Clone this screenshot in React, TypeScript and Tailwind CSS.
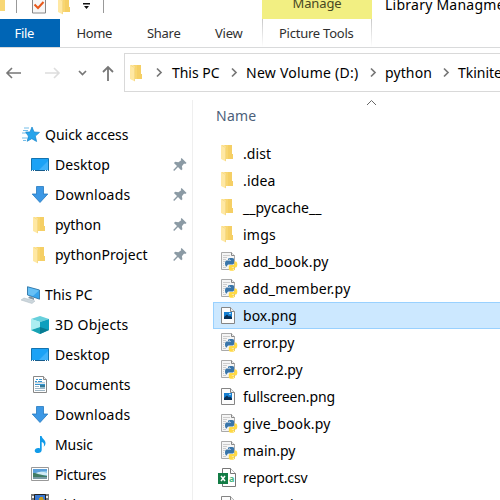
import { useLayoutEffect, useRef, useState } from 'react';

function Label({ text, width, className = '' }: { text: string; width: number; className?: string }) {
  const ref = useRef<HTMLSpanElement>(null);
  const [spacing, setSpacing] = useState(0);
  useLayoutEffect(() => {
    if (ref.current) {
      const natural = ref.current.getBoundingClientRect().width;
      setSpacing((width - natural) / text.length);
    }
  }, [text, width]);
  return (
    <span ref={ref} className={`shrink-0 whitespace-pre ${className}`} style={{ letterSpacing: spacing }}>
      {text}
    </span>
  );
}

const svg = 'block shrink-0 overflow-visible';

function Folder() {
  return (
    <svg className={svg} width="18" height="18" viewBox="0 0 18 18">
      <path d="M5 1h8v9h1v5H5z" fill="#f8d671" />
      <path d="M9 1h4v9h1v5H9z" fill="#f5cf65" />
      <path d="M2 1h3l2 2v14.5L2 15z" fill="#ffe8a3" />
      <path d="M3 1.5 6.5 3.6V17" fill="none" stroke="#f2d47c" strokeWidth=".7" />
    </svg>
  );
}

function Star() {
  return (
    <svg className={svg} width="18" height="18" viewBox="0 0 18 18">
      <path d="M10 1l2 5 5.5.4-4.2 3.7 1.3 5.4-4.8-2.8-4.6 2.6 1.2-5.2L3.5 6 8 6z" fill="#27a4eb" stroke="#1484cc" strokeWidth=".7" />
      <path d="M2 2h5M1 4.5h5M0 7h4M0 12h5M1 14.5h3" stroke="#75bee9" strokeWidth="1" />
    </svg>
  );
}

function Desktop() {
  return (
    <svg className={svg} width="18" height="18" viewBox="0 0 18 18">
      <path d="M.5 2.5h17v12H.5z" fill="#1ba2f6" stroke="#1473af" />
      <path d="M8 14 17 5v9z" fill="#40b2fa" />
      <path d="M.5 14.5h17" stroke="#155b8c" />
      <path d="M1 14.5h1M3 14.5h1M14 14.5h1M16 14.5h1" stroke="#fff" />
    </svg>
  );
}

function Download() {
  return (
    <svg className={svg} width="18" height="18" viewBox="0 0 18 18">
      <path d="M5.5.5h7V8h4.3L9 16.5 1.2 8h4.3z" fill="#3c98e5" stroke="#2579bf" strokeWidth=".8" />
    </svg>
  );
}

function Computer() {
  return (
    <svg className={svg} width="20" height="18" viewBox="0 0 20 18">
      <path d="M6 0l12 3.5v9L6 8z" fill="#d7e2e8" />
      <path d="M6.5.8 18.5 4v9.2L6.5 9z" fill="#37a4ec" stroke="#286d9e" strokeWidth=".8" />
      <path d="M7 1.5l11 3-6 5.5-5-1.6z" fill="#67c0f5" />
      <path d="M9 10l4 2v2l-6-2z" fill="#8197a5" />
      <path d="M0 14l3-2 11 3-3 2.5z" fill="#ccd6dc" stroke="#aab8c1" strokeWidth=".5" />
    </svg>
  );
}

function Cube() {
  return (
    <svg className={svg} width="18" height="18" viewBox="0 0 18 18">
      <path d="M0 3 9 0l9 3-9 3z" fill="#67d0dc" />
      <path d="M0 3l9 3v12l-9-4z" fill="#8ee6ec" />
      <path d="M9 6l9-3v11l-9 4z" fill="#0d9fbe" />
      <path d="M0 14l9-3v7z" fill="#18a2b3" />
      <path d="M9 11l9 3-9 4z" fill="#087b92" />
      <path d="M0 3l9 3v5l-9 3z" fill="#bcf2f4" opacity=".65" />
    </svg>
  );
}

function Documents() {
  return (
    <svg className={svg} width="18" height="18" viewBox="0 0 18 18">
      <path d="M2.5.5h10l3 3v13h-13z" fill="#fff" stroke="#888" />
      <path d="M12.5.5v3h3" fill="#eee" stroke="#888" />
      <path d="M5 3.5h2M8 3.5h3M4 5.5h2M7 5.5h4M4 8.5h10" stroke="#3595d2" />
      <path d="M4 6.8h10M4 10.5h4M4 12.5h10M4 14.5h10" stroke="#9db5c4" />
      <path d="M9 9h5v2.5H9z" fill="#347b9a" />
    </svg>
  );
}

function Music() {
  return (
    <svg className={svg} width="18" height="18" viewBox="0 0 18 18">
      <path d="M9 0h1.6c.5 3 4.2 4 3.9 7.2 0 1.5-.8 2.5-1.8 3.5.9-2.5 0-4.2-2-4.6v8c0 1.9-1.6 3-3.6 3-1.8 0-3.4-.7-3.4-2.3 0-2 2.7-3.4 5.3-2.4z" fill="#119be9" />
    </svg>
  );
}

function Pictures() {
  return (
    <svg className={svg} width="18" height="18" viewBox="0 0 18 18">
      <path d="M.5 1.5h17v13H.5z" fill="#fff" stroke="#999" />
      <path d="M2 3h14v10H2z" fill="#8bc9ec" />
      <path d="M2 3h14v2q-6 0-14 3z" fill="#5b9fda" />
      <path d="M5 7q5-2 8-1l3 1v2H4z" fill="#d1eaf4" />
      <path d="M2 7c4 0 7 2 14 3v1H2z" fill="#427c65" />
      <path d="M2 11h14v2H2z" fill="#789aa4" />
    </svg>
  );
}

function Videos() {
  return (
    <svg className={svg} width="18" height="18" viewBox="0 0 18 18">
      <path d="M0-2h18v18H0z" fill="#777" />
      <path d="M1 0h2v2H1zM1 4h2v2H1zM15 0h2v2h-2zM15 4h2v2h-2z" fill="#eee" />
      <path d="M3.5-1.5h11v17h-11z" fill="#3a78d0" stroke="#222" />
      <path d="M9 1h3v2h1v4H8V2h1z" fill="#c39b22" />
    </svg>
  );
}

function Pin() {
  return (
    <svg className={`${svg} text-[#8b9aa4]`} width="14" height="14" viewBox="0 0 14 14">
      <path d="M8.6 0 13.6 5l-1.5.9-1-.3-2.2 2.6.5 3-1.2 1.1L5 9.1 1.2 13l-1-.9L4 8.1.9 5l1.4-1.2 3.1.4L8.2 2.2 7.8 1z" fill="currentColor" />
    </svg>
  );
}

function Page({ children }: { children?: React.ReactNode }) {
  return (
    <svg className={svg} width="20" height="20" viewBox="0 0 20 20">
      <path d="M3.5 1.5h9l4 4v12h-13z" fill="#fcfcfc" stroke="#858585" />
      <path d="M12.5 1.5v4h4" fill="#eee" stroke="#858585" />
      {children}
    </svg>
  );
}

function Python() {
  return (
    <svg className={svg} width="20" height="20" viewBox="0 0 20 20">
      <path d="M3.5.5h10l3 3v14h-13z" fill="#f5f5f5" stroke="#aaa" />
      <path d="M13.5.5v3h3" fill="#eee" stroke="#888" />
      <path d="M5 3.5h7M5 5.5h4M5 7.5h3M5 9.5h2M5 11.5h1M5 13.5h1M5 15.5h3" stroke="#ccc" />
      <path d="M10 7c0-1.4 6-1.4 6 0v4c0 1-1 1.5-2 1.5h-3c-1 0-2 .6-2 2H8.500c-2 0-2-6 0-6h4.500V8h-3z" fill="#3975a9" />
      <path d="M16.500 9.500h1.3c2 0 2 6 0 6h-4v.5h3v1.500c0 1.800-6 1.800-6 0V14.500c0-1 .8-1.500 1.800-1.500h2.400c1 0 1.500-.7 1.500-1.500z" fill="#ffd944" />
      <circle cx="11.3" cy="7.2" r=".5" fill="#d7e6f2" />
      <circle cx="15.3" cy="17.2" r=".5" fill="#fff" />
    </svg>
  );
}

function Image() {
  return (
    <Page>
      <path d="M6 6h8v7H6z" fill="#157fd2" />
      <path d="M6 11l3-2.500 2 2 1-1 2 2V13H6z" fill="#0a3157" />
      <circle cx="12" cy="7.5" r=".8" fill="#d8f1ff" />
    </Page>
  );
}

function Csv() {
  return (
    <svg className={svg} width="20" height="20" viewBox="0 0 20 20">
      <path d="M4.500.5h8l5 5v13h-13z" fill="#fff" stroke="#777" />
      <path d="M12.5.5v5h5" fill="#fff" stroke="#777" />
      <path d="M0 5h10v11H0z" fill="#137c45" />
      <path d="M3 8l4 5M7 8l-4 5" stroke="#fff" strokeWidth="1.5" />
      <text x="11" y="14" className="fill-[#45b77b] font-['Noto_Sans',sans-serif] text-[9px] font-bold">a</text>
    </svg>
  );
}

function Chevron() {
  return (
    <svg className={svg} width="6" height="10" viewBox="0 0 6 10">
      <path d="M1 .5l4 4-4 4" fill="none" stroke="#777" strokeWidth="1.7" />
    </svg>
  );
}

const quick = [
  { name: 'Desktop', w: 55, icon: <Desktop /> },
  { name: 'Downloads', w: 75.5, icon: <Download /> },
  { name: 'python', w: 46, icon: <Folder /> },
  { name: 'pythonProject', w: 92.5, icon: <Folder /> },
];
const pc = [
  { name: '3D Objects', w: 73.5, icon: <Cube /> },
  { name: 'Desktop', w: 55, icon: <Desktop /> },
  { name: 'Documents', w: 75.5, icon: <Documents /> },
  { name: 'Downloads', w: 75.5, icon: <Download /> },
  { name: 'Music', w: 38, icon: <Music /> },
  { name: 'Pictures', w: 51, icon: <Pictures /> },
  { name: 'Videos', w: 45, icon: <Videos /> },
];
const files = [
  { name: '.dist', w: 28, icon: 'folder' },
  { name: '.idea', w: 32.5, icon: 'folder' },
  { name: '__pycache__', w: 78.5, icon: 'folder' },
  { name: 'imgs', w: 33, icon: 'folder' },
  { name: 'add_book.py', w: 85.5, icon: 'py' },
  { name: 'add_member.py', w: 107.5, icon: 'py' },
  { name: 'box.png', w: 54, icon: 'png' },
  { name: 'error.py', w: 51.5, icon: 'py' },
  { name: 'error2.py', w: 59.5, icon: 'py' },
  { name: 'fullscreen.png', w: 92, icon: 'png' },
  { name: 'give_book.py', w: 87.5, icon: 'py' },
  { name: 'main.py', w: 52.5, icon: 'py' },
  { name: 'report.csv', w: 64.5, icon: 'csv' },
  { name: 'append.py', w: 70, icon: 'page' },
];

function FileIcon({ kind }: { kind: string }) {
  if (kind === 'folder') return <div className="pb-0.5 pl-px"><Folder /></div>;
  if (kind === 'py') return <Python />;
  if (kind === 'png') return <Image />;
  if (kind === 'csv') return <Csv />;
  return <Page />;
}

function SideRow({ name, w, icon, pinned }: { name: string; w: number; icon: React.ReactNode; pinned?: boolean }) {
  return (
    <div className="flex h-[30px] shrink-0 items-center pl-[31px]">
      {icon}
      <div className="flex w-[118px] pb-0.5 pl-1.5"><Label text={name} width={w} /></div>
      {pinned && <div className="pl-1.5"><Pin /></div>}
    </div>
  );
}

export default function App() {
  return (
    <div className="flex h-[500px] w-[500px] flex-col overflow-hidden bg-white font-['Noto_Sans',sans-serif] text-sm leading-[27px] text-black">
      <div className="flex h-[19px] shrink-0 overflow-hidden">
        <div className="flex w-[262px] shrink-0">
          <div className="h-[11px] w-[5px] bg-[#f8d775]" />
          <div className="ml-[11px] h-[13px] w-px bg-[#999]" />
          <svg className="ml-[15px] block shrink-0" width="14" height="14" viewBox="0 0 14 14">
            <path d="M.5-5h13v18H.5z" fill="#f7f7f7" stroke="#888" />
            <path d="M2.5 4.5 6 8l5.5-6" fill="none" stroke="#e8591c" strokeWidth="2" />
          </svg>
          <div className="-mt-[3px] ml-[10px]"><Folder /></div>
          <svg className="mt-[2px] ml-[9px] block shrink-0" width="8" height="8" viewBox="0 0 8 8">
            <path d="M0 1h7v1.4H0zM1 4h5L3.5 7z" fill="#111" />
          </svg>
          <div className="ml-[12px] h-[13px] w-px bg-[#999]" />
        </div>
        <div className="flex w-[110px] shrink-0 justify-center bg-[#f2ef82] text-[13px] text-[#484823]">
          <div className="-mt-[10px]"><Label text="Manage" width={49} /></div>
        </div>
        <div className="-mt-[9px] pl-[13px]"><Label text="Library Managment" width={134} /></div>
      </div>
      <div className="flex h-[29px] shrink-0 border-b border-[#d9dadb] text-[13px] text-[#303030]">
        <div className="flex h-7 w-[60px] bg-[#0065b5] pl-[14.5px] pt-px text-white"><Label text="File" width={19.5} /></div>
        <div className="flex w-[70px] pl-[16.500px] pt-px"><Label text="Home" width={35.5} /></div>
        <div className="flex w-[68px] pl-[17px] pt-px"><Label text="Share" width={33.5} /></div>
        <div className="flex w-[64px] pl-[17px] pt-px"><Label text="View" width={27.5} /></div>
        <div className="flex w-[110px] bg-gradient-to-b from-[#c8c8c8] to-white px-px">
          <div className="flex w-full bg-white pl-4 pt-px"><Label text="Picture Tools" width={74.5} /></div>
        </div>
      </div>
      <div className="flex h-[44px] shrink-0 pt-[5px]">
        <div className="flex w-[124px] shrink-0 items-center pl-1.5">
          <svg className={svg} width="16" height="12" viewBox="0 0 16 12"><path d="M15 6H1M6 1 1 6l5 5" fill="none" stroke="#777" strokeWidth="1.6" /></svg>
          <svg className={`${svg} ml-[23px]`} width="16" height="12" viewBox="0 0 16 12"><path d="M0 6h14M9 1l5 5-5 5" fill="none" stroke="#ddd" strokeWidth="1.6" /></svg>
          <svg className={`${svg} ml-[17px]`} width="9" height="6" viewBox="0 0 9 6"><path d="M1 1l3.5 3.5L8 1" fill="none" stroke="#777" strokeWidth="1.7" /></svg>
          <svg className={`${svg} mt-0.5 ml-[15px]`} width="12" height="16" viewBox="0 0 12 16"><path d="M6 15V1M1 6l5-5 5 5" fill="none" stroke="#777" strokeWidth="1.8" /></svg>
        </div>
        <div className="flex h-[39px] w-[376px] shrink-0 items-center overflow-hidden border border-r-0 border-[#d9d9d9] pl-[3px]">
          <Folder />
          <div className="flex w-[26px] shrink-0 pl-[10px]"><Chevron /></div>
          <div className="flex w-[59px] shrink-0"><Label text="This PC" width={47.5} /></div>
          <div className="flex w-[15px] shrink-0"><Chevron /></div>
          <div className="flex w-[124px] shrink-0"><Label text="New Volume (D:)" width={112.5} /></div>
          <div className="flex w-[15px] shrink-0"><Chevron /></div>
          <div className="flex w-[58px] shrink-0"><Label text="python" width={47} /></div>
          <div className="flex w-[15px] shrink-0"><Chevron /></div>
          <Label text="Tkinite" width={44} />
        </div>
      </div>
      <div className="flex h-[408px] shrink-0">
        <div className="mt-2 flex h-[400px] w-[193px] shrink-0 flex-col overflow-hidden border-r border-[#efefef] pt-5">
          <div className="flex h-[30px] shrink-0 items-center pl-[22px]"><Star /><div className="flex pb-0.5 pl-[5px]"><Label text="Quick access" width={83.5} /></div></div>
          {quick.map((item) => <SideRow key={item.name} {...item} pinned />)}
          <div className="mt-[10px] flex h-[30px] shrink-0 items-center pl-[21px]"><Computer /><div className="flex pb-0.5 pl-1"><Label text="This PC" width={47.5} /></div></div>
          {pc.map((item) => <SideRow key={item.name} {...item} />)}
        </div>
        <div className="flex w-[307px] shrink-0 flex-col overflow-hidden pl-5">
          <div className="flex h-12 shrink-0 pt-[10px] text-[#4c607a]">
            <div className="flex w-[153px] pl-[3px]"><Label text="Name" width={40.5} /></div>
            <svg className="-mt-[3px] block" width="11" height="7" viewBox="0 0 11 7"><path d="M1 6l4.5-4.5L10 6" fill="none" stroke="#666" /></svg>
          </div>
          {files.map(({ name, w, icon }) => (
            <div key={name} className={`flex h-[27px] shrink-0 items-center border border-r-0 ${name === 'box.png' ? 'border-[#99d1ff] bg-[#cce8ff]' : 'border-transparent'}`}>
              <div className="flex w-[29px] shrink-0 pl-1"><FileIcon kind={icon} /></div>
              <Label text={name} width={w} />
            </div>
          ))}
        </div>
      </div>
    </div>
  );
}
